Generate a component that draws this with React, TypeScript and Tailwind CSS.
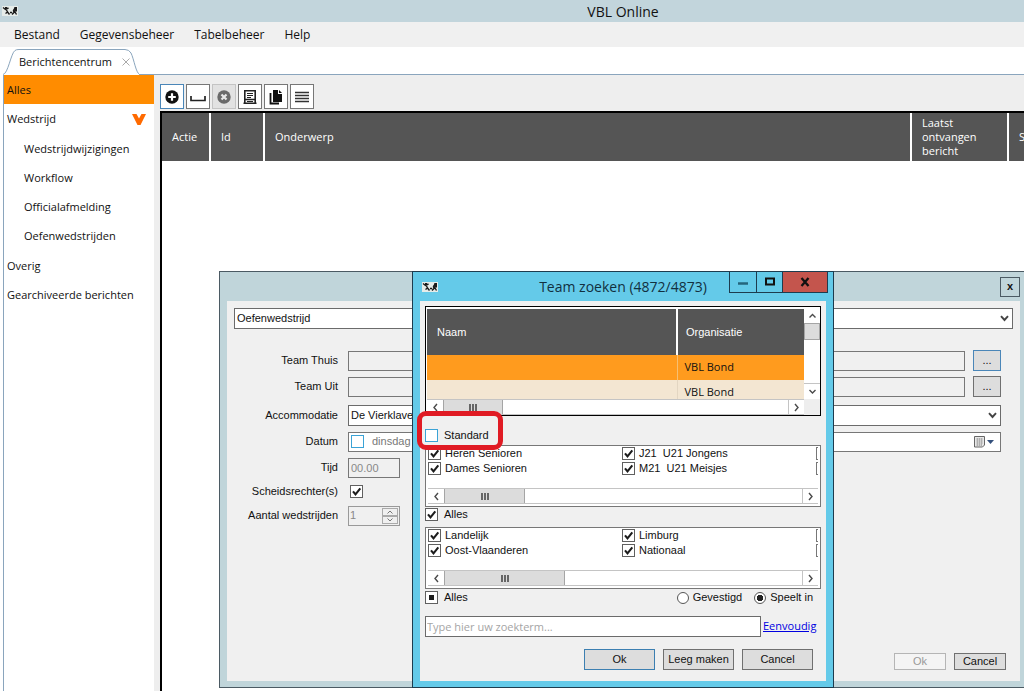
import { useState, type ReactNode } from "react";

const sans = "font-['Open_Sans','Noto_Sans',sans-serif]";
const classic = "font-['Liberation_Sans',Arial,sans-serif]";

function Logo() {
  return (
    <svg className="h-3 w-4 shrink-0" viewBox="0 0 16 12" aria-hidden="true">
      <rect y="1" width="16" height="10" fill="#e6ece9" />
      <g fill="none" stroke="#1a1a1a" strokeWidth="1.4">
        <path d="M1 2.500l2.500 2L6.500 3M4 4l1.500 3-2 1.500M5.500 7l2 2.500" />
        <path d="M8 7.500h2.200M13.500 2.500l-2 3 .5 2-2 2M12.500 6L14.500 9.500" />
      </g>
      <path d="M3 2h2v2H3zM12.500 2H15v4.500h-3z" fill="#1a1a1a" />
    </svg>
  );
}

type CheckProps = { label?: string; state?: "on" | "off" | "mixed"; blue?: boolean; name?: string; narrow?: boolean };

function Check({ label, state = "on", blue = false, name, narrow = false }: CheckProps) {
  const [value, setValue] = useState(state);
  return (
    <label className={`flex items-center leading-[13px] ${narrow ? "gap-1" : "gap-1.5"}`}>
      <span className="grid size-[13px] shrink-0">
        <input
          type="checkbox"
          aria-label={label ? undefined : name}
          checked={value === "on"}
          onChange={() => setValue(value === "on" ? "off" : "on")}
          className={`size-[13px] appearance-none border bg-white [grid-area:1/1] ${blue ? "border-[#3ba3d6]" : "border-[#606060]"}`}
        />
        {value !== "off" && (
          <svg viewBox="0 0 13 13" className="pointer-events-none size-[13px] [grid-area:1/1]" aria-hidden="true">
            {value === "on" ? (
              <path d="M3 6.300l2.500 3L10.300 3.400" fill="none" stroke="#1c1c1c" strokeWidth="2.100" />
            ) : (
              <rect x="4" y="4" width="5" height="5" fill="#1c1c1c" />
            )}
          </svg>
        )}
      </span>
      {label && <span className="whitespace-pre">{label}</span>}
    </label>
  );
}

function Chevron({ dir, className = "" }: { dir: "up" | "down" | "left" | "right"; className?: string }) {
  const d = {
    up: "M2.5 6.5L5.5 3.5 8.5 6.5",
    down: "M2.5 4L5.5 7 8.5 4",
    left: "M7 2L4 5.5 7 9",
    right: "M4 2l3 3.5L4 9",
  }[dir];
  return (
    <svg viewBox="0 0 11 11" className={`size-[11px] ${className}`} aria-hidden="true">
      <path d={d} fill="none" stroke="#4a4a4a" strokeWidth="1.4" />
    </svg>
  );
}

function HScroll({ thumb }: { thumb: string }) {
  return (
    <div className="flex h-4 border-y border-[#c4c4c4] bg-white">
      <div className="grid w-4 shrink-0 place-items-center">
        <Chevron dir="left" />
      </div>
      <div className={`flex items-center justify-center gap-px border-x border-[#a5a5a5] bg-[#dcdcdc] ${thumb}`}>
        <i className="h-[7px] w-0.5 bg-[#666]" />
        <i className="h-[7px] w-0.5 bg-[#666]" />
        <i className="h-[7px] w-0.5 bg-[#666]" />
      </div>
      <div className="ml-auto grid w-4 shrink-0 place-items-center border-l border-[#c4c4c4]">
        <Chevron dir="right" />
      </div>
    </div>
  );
}

function Select({ id, value, label }: { id: string; value: string; label?: string }) {
  return (
    <div className="grid h-[21px] w-full items-center">
      <select id={id} aria-label={label} className="h-[21px] w-full appearance-none border border-[#6b6b6b] bg-white px-0.5 [grid-area:1/1]">
        <option>{value}</option>
      </select>
      <svg viewBox="0 0 9 7" className="pointer-events-none mr-1 h-[7px] w-[9px] justify-self-end [grid-area:1/1]" aria-hidden="true">
        <path d="M1 1.2l3.5 3.8L8 1.2" fill="none" stroke="#444" strokeWidth="1.9" />
      </svg>
    </div>
  );
}

function Field({ label, id, children, className = "h-[21px]" }: { label: string; id?: string; children: ReactNode; className?: string }) {
  return (
    <div className={`flex items-center ${className}`}>
      <label htmlFor={id} className="w-[104px] shrink-0 whitespace-nowrap text-right">
        {label}
      </label>
      <div className="ml-2.5 flex min-w-0 flex-1 items-center gap-2">{children}</div>
    </div>
  );
}

function ToolButton({ name, look = "border-[#777] bg-white", children }: { name: string; look?: string; children: ReactNode }) {
  return (
    <button aria-label={name} className={`grid h-[25px] w-6 place-items-center border ${look}`}>
      <svg viewBox="0 0 16 16" className="size-4" aria-hidden="true">
        {children}
      </svg>
    </button>
  );
}

function Sidebar() {
  const row = "flex h-[29px] w-full items-center pt-px text-left";
  return (
    <nav className="w-[151px] shrink-0 border-l border-[#8aa5bd] bg-white text-[11px]">
      <button className={`${row} bg-[#ff8c00] pl-[3px]`}>Alles</button>
      <button className={`${row} justify-between pl-[3px] pr-2`}>
        Wedstrijd
        <svg viewBox="0 0 14 11" className="h-[11px] w-3.5" aria-hidden="true">
          <path d="M0 0h4.500L7 4.500 9.500 0H14L8.500 11h-3z" fill="#ff6a00" />
        </svg>
      </button>
      <div className="py-px">
        {["Wedstrijdwijzigingen", "Workflow", "Officialafmelding", "Oefenwedstrijden"].map((t) => (
          <button key={t} className={`${row} pl-5`}>
            {t}
          </button>
        ))}
      </div>
      <button className={`${row} pl-[3px]`}>Overig</button>
      <button className={`${row} whitespace-nowrap pl-[3px]`}>Gearchiveerde berichten</button>
    </nav>
  );
}

function Messages() {
  const th = "border-r-2 border-white px-2.5 text-left font-normal";
  return (
    <main className="flex min-w-0 flex-1 flex-col bg-[#eee] pl-1.5">
      <div className="flex h-9 items-end gap-0.5 pb-0.5">
        <ToolButton name="Toevoegen" look="border-[#4a86b8] bg-white">
          <circle cx="8" cy="8" r="6.700" fill="#111" />
          <path d="M8 4.200v7.600M4.200 8h7.600" stroke="#fff" strokeWidth="2.200" />
        </ToolButton>
        <ToolButton name="Openen">
          <path d="M1 7v4.500h14V7" fill="none" stroke="#222" strokeWidth="1.700" />
        </ToolButton>
        <ToolButton name="Verwijderen" look="border-[#c4c4c4] bg-[#e2e2e2]">
          <circle cx="8" cy="8" r="6.700" fill="#6a6a6a" />
          <path d="M5.500 5.500l5 5M10.500 5.500l-5 5" stroke="#e8e8e8" strokeWidth="2.200" />
        </ToolButton>
        <ToolButton name="Lezen">
          <path d="M2.800 1.800h10.400v12.400H2.800zM1.500 14.200h13M2.800 10.500h10.400" fill="none" stroke="#222" strokeWidth="1.600" />
          <path d="M5 4.500h6M5 6.500h6M5 8.500h4M5 12.500h6" stroke="#222" />
        </ToolButton>
        <ToolButton name="Kopiëren">
          <path d="M5 1h5v4h4v8H5z" fill="#111" />
          <path d="M11 1l3 3h-3z" fill="#111" />
          <path d="M2.500 4v10.500H11" fill="none" stroke="#111" strokeWidth="1.800" />
        </ToolButton>
        <ToolButton name="Lijst">
          <path d="M1 3.500h14M1 6.500h14M1 9.500h14M1 12.500h14" stroke="#333" strokeWidth="1.300" />
        </ToolButton>
      </div>
      <div className="flex-1 border-l-2 border-t-2 border-black bg-white">
        <table className="w-full table-fixed border-separate border-spacing-0 text-[11px] leading-[14px] text-white">
          <colgroup>
            <col className="w-[49px]" />
            <col className="w-[54px]" />
            <col />
            <col className="w-[97px]" />
            <col className="w-[15px]" />
          </colgroup>
          <thead>
            <tr className="h-12 bg-[#555]">
              <th className={th}>Actie</th>
              <th className={th}>Id</th>
              <th className={th}>Onderwerp</th>
              <th className={th}>Laatst ontvangen bericht</th>
              <th className="overflow-hidden pl-2.5 text-left font-normal">S</th>
            </tr>
          </thead>
        </table>
      </div>
    </main>
  );
}

function MatchDialog() {
  const field = "h-5 border border-[#777] bg-[#f0f0f0] px-0.5";
  const button = "border border-[#707070] bg-[#ddd]";
  return (
    <section aria-label="Oefenwedstrijd" className={`absolute bottom-[3px] left-[219px] right-0 top-[271px] flex flex-col border border-r-0 border-[#4b5a63] bg-[#c0d5da] pb-1.5 pl-[7px] pr-1 text-[11px] ${classic}`}>
      <header className="flex h-[29px] shrink-0 items-center justify-end">
        <button aria-label="Sluiten" className="grid size-5 place-items-center border border-[#4b5a63] text-[11px] font-bold leading-none">
          x
        </button>
      </header>
      <div className="flex flex-1 flex-col bg-[#f0f0f0] p-[7px]">
        <Select id="kind" label="Soort" value="Oefenwedstrijd" />
        <div className="mt-[21px] flex flex-col gap-[5px] pr-3">
          <Field label="Team Thuis" id="home">
            <input id="home" readOnly className={`${field} min-w-0 flex-1`} />
            <button aria-label="Team Thuis zoeken" className="h-[21px] w-7 border border-[#4a86b8] bg-[#ddd]">...</button>
          </Field>
          <Field label="Team Uit" id="away">
            <input id="away" readOnly className={`${field} min-w-0 flex-1`} />
            <button aria-label="Team Uit zoeken" className={`${button} h-[21px] w-7`}>...</button>
          </Field>
          <Field label="Accommodatie" id="venue" className="mt-[3px] h-[21px]">
            <Select id="venue" value="De Vierklaver" />
          </Field>
          <Field label="Datum">
            <div className="flex h-5 flex-1 items-center border border-[#777] bg-white pl-0.5 pr-1.5 text-[#777]">
              <Check state="off" blue name="Datum instellen" />
              <span className="ml-2">dinsdag</span>
              <svg viewBox="0 0 20 12" className="ml-auto h-3 w-5" aria-hidden="true">
                <path d="M.5.5h10v8.500l-2 2h-8z" fill="#e8e8e8" stroke="#666" />
                <path d="M2 3h7M2 5h7M2 7h7M2 9h6M3.500 2v8M5.500 2v8M7.500 2v8" stroke="#999" strokeWidth=".6" />
                <path d="M13 4h7l-3.500 4z" fill="#34507c" />
              </svg>
            </div>
          </Field>
          <Field label="Tijd" id="time">
            <input id="time" defaultValue="00.00" className={`${field} w-[52px] text-[#888]`} />
          </Field>
          <Field label="Scheidsrechter(s)" className="h-[17px]">
            <div className="pl-0.5">
              <Check name="Scheidsrechter(s)" />
            </div>
          </Field>
          <Field label="Aantal wedstrijden" id="count">
            <div className="flex h-5 w-[52px] border border-[#999]">
              <input id="count" defaultValue="1" className="min-w-0 flex-1 px-px text-[#888]" />
              <div className="m-px flex w-4 flex-col">
                <button aria-label="Meer" className="grid h-2 place-items-center overflow-hidden border border-[#aaa]">
                  <svg viewBox="0 0 6 4" className="h-1 w-1.5"><path d="M.5 3.500L3 1l2.500 2.500" fill="none" stroke="#777" /></svg>
                </button>
                <button aria-label="Minder" className="grid h-2 place-items-center overflow-hidden border border-[#aaa]">
                  <svg viewBox="0 0 6 4" className="h-1 w-1.5"><path d="M.5.5L3 3 5.500.5" fill="none" stroke="#777" /></svg>
                </button>
              </div>
            </div>
          </Field>
        </div>
        <footer className="mt-auto flex justify-end gap-2 pb-1 pr-[7px]">
          <button disabled className="h-[17px] w-[52px] border border-[#b5b5b5] bg-[#f4f4f4] leading-none text-[#999]">Ok</button>
          <button className={`${button} h-[17px] w-[52px] leading-none`}>Cancel</button>
        </footer>
      </div>
    </section>
  );
}

function CheckPanel({ items, thumb }: { items: string[]; thumb: string }) {
  return (
    <div className="flex h-[62px] flex-col justify-between border border-[#777] bg-white px-0.5 pb-0.5 pt-px">
      <div className="flex justify-between">
        <div className="grid flex-1 grid-cols-2 gap-y-0.5">
          {items.map((t) => (
            <Check key={t} label={t} narrow />
          ))}
        </div>
        <div className="flex w-0.5 flex-col gap-0.5">
          <i className="h-[13px] border border-r-0 border-[#777]" />
          <i className="h-[13px] border border-r-0 border-[#777]" />
        </div>
      </div>
      <HScroll thumb={thumb} />
    </div>
  );
}

function Radio({ label, checked = false }: { label: string; checked?: boolean }) {
  return (
    <label className="flex items-center gap-1 leading-[13px]">
      <input
        type="radio"
        name="scope"
        defaultChecked={checked}
        className="size-3 appearance-none rounded-full border border-[#555] bg-white checked:bg-[radial-gradient(circle,#222_0_3px,#fff_3.5px)]"
      />
      {label}
    </label>
  );
}

function TeamDialog() {
  const button = "h-[21px] w-[71px] border bg-[#ddd] leading-none";
  return (
    <section aria-label="Team zoeken" className={`absolute bottom-[3px] left-[412px] top-[271px] flex w-[422px] flex-col border border-[#1d3c4f] bg-[#64cae9] px-[7px] pb-1.5 text-[11px] ${classic}`}>
      <header className="grid h-[29px] shrink-0 grid-cols-[99px_1fr_99px]">
        <div className="flex items-center pl-0.5">
          <Logo />
        </div>
        <h2 className={`self-center text-center text-[14px] whitespace-nowrap text-[#12303f] ${sans}`}>Team zoeken (4872/4873)</h2>
        <div className="-mr-0.5 flex h-[21px] justify-end">
          <button aria-label="Minimaliseren" className="grid w-7 place-items-center border border-t-0 border-[#1d3c4f]">
            <svg viewBox="0 0 12 12" className="size-3"><path d="M1 7.500h10" stroke="#24657c" strokeWidth="2.500" /></svg>
          </button>
          <button aria-label="Maximaliseren" className="grid w-[25px] place-items-center border-b border-[#1d3c4f]">
            <svg viewBox="0 0 12 12" className="size-3"><path d="M2 2.500h8v6H2z" fill="none" stroke="#111" strokeWidth="2" /></svg>
          </button>
          <button aria-label="Sluiten" className="grid w-[46px] place-items-center border border-t-0 border-[#1d3c4f] bg-[#c4554d]">
            <svg viewBox="0 0 12 12" className="size-3"><path d="M2.500 2l7 8M9.500 2l-7 8" stroke="#111" strokeWidth="2.300" /></svg>
          </button>
        </div>
      </header>
      <div className="flex flex-1 flex-col bg-[#f0f0f0] px-[5px] pt-[5px]">
        <div className="flex h-[110px] shrink-0 flex-col border border-black bg-white pl-px pt-0.5">
          <div className="flex min-h-0 flex-1">
            <div className="min-w-0 flex-1 overflow-hidden">
              <table className="w-full table-fixed border-collapse">
                <thead>
                  <tr className="h-[46px] bg-[#555] text-left text-white">
                    <th className="w-[250px] border-r-2 border-white pl-2.5 font-normal">Naam</th>
                    <th className="pl-2 font-normal">Organisatie</th>
                  </tr>
                </thead>
                <tbody className={sans}>
                  <tr className="h-[25px] bg-[#ff9b1e]">
                    <td className="border-r border-[#f7bf72]" />
                    <td className="pl-[7px]">VBL Bond</td>
                  </tr>
                  <tr className="h-6 bg-[#f3e6d2]">
                    <td className="border-r border-[#e3d6c2]" />
                    <td className="pl-[7px]">VBL Bond</td>
                  </tr>
                </tbody>
              </table>
            </div>
            <div className="flex w-4 flex-col bg-white">
              <div className="grid h-3.5 place-items-center"><Chevron dir="up" /></div>
              <div className="h-[17px] border border-[#a5a5a5] bg-[#dcdcdc]" />
              <div className="mt-auto grid h-4 place-items-center border-t border-[#c4c4c4]"><Chevron dir="down" /></div>
            </div>
          </div>
          <div className="flex bg-[#eee]">
            <div className="flex-1"><HScroll thumb="w-[60px]" /></div>
            <div className="w-4" />
          </div>
        </div>
        <div className="mt-[13px]">
          <Check label="Standard" state="off" blue />
        </div>
        <div className="mt-[3px]">
          <CheckPanel items={["Heren Senioren", "J21  U21 Jongens", "Dames Senioren", "M21  U21 Meisjes"]} thumb="w-[81px]" />
        </div>
        <div className="mt-px">
          <Check label="Alles" />
        </div>
        <div className="mt-1.5">
          <CheckPanel items={["Landelijk", "Limburg", "Oost-Vlaanderen", "Nationaal"]} thumb="w-[121px]" />
        </div>
        <div className="mt-0.5 flex justify-between pr-2">
          <Check label="Alles" state="mixed" />
          <div className="flex gap-3">
            <Radio label="Gevestigd" />
            <Radio label="Speelt in" checked />
          </div>
        </div>
        <div className={`mt-3 flex items-center gap-0.5 ${sans}`}>
          <input aria-label="Zoekterm" placeholder="Type hier uw zoekterm..." className="h-[21px] min-w-0 flex-1 border border-[#6b6b6b] bg-white px-px placeholder:text-[#a5a5a5]" />
          <a href="#eenvoudig" className="w-[58px] text-[#0000e0] underline">Eenvoudig</a>
        </div>
        <div className="mt-3 flex justify-end gap-2 pr-2">
          <button className={`${button} border-[#3c7fb1]`}>Ok</button>
          <button className={`${button} border-[#707070]`}>Leeg maken</button>
          <button className={`${button} border-[#707070]`}>Cancel</button>
        </div>
      </div>
      <div className="pointer-events-none absolute left-1 top-[139px] h-[39px] w-[86px] rounded-[9px] border-[5px] border-[#e01b24]" />
    </section>
  );
}

export default function App() {
  return (
    <div className={`relative flex min-h-screen flex-col overflow-hidden bg-white text-[#111] ${sans}`}>
      <header className="flex h-[22px] items-center bg-[#c2d5dc] pl-0.5">
        <Logo />
        <h1 className="flex-1 pl-[204px] text-center text-[14px]">VBL Online</h1>
      </header>
      <div className="flex h-[25px] items-center gap-5 bg-[#f0f0f0] pl-3.5 pt-px text-[12px]">
        {["Bestand", "Gegevensbeheer", "Tabelbeheer", "Help"].map((t) => (
          <button key={t}>{t}</button>
        ))}
      </div>
      <div className="flex h-7 items-end pl-[3px]">
        <div className="grid h-[26px] w-[136px]">
          <svg viewBox="0 0 136 26" className="h-[26px] w-[136px] [grid-area:1/1]" aria-hidden="true">
            <path d="M0 25.500C5 25 8 4 12 1.500Q13 .5 16 .5H122Q126 .5 128 4C131 10 133 25 137 25.500" fill="#fff" stroke="#8aa5bd" />
          </svg>
          <div className="flex items-center gap-2.5 pl-4 text-[11px] [grid-area:1/1]">
            <button>Berichtencentrum</button>
            <button aria-label="Tabblad sluiten">
              <svg viewBox="0 0 8 8" className="size-2"><path d="M.5.5l7 7M7.500.5l-7 7" stroke="#aaa" /></svg>
            </button>
          </div>
        </div>
        <div className="h-px flex-1 bg-[#8aa5bd]" />
      </div>
      <div className="flex flex-1 pl-[3px]">
        <Sidebar />
        <Messages />
      </div>
      <MatchDialog />
      <TeamDialog />
    </div>
  );
}
